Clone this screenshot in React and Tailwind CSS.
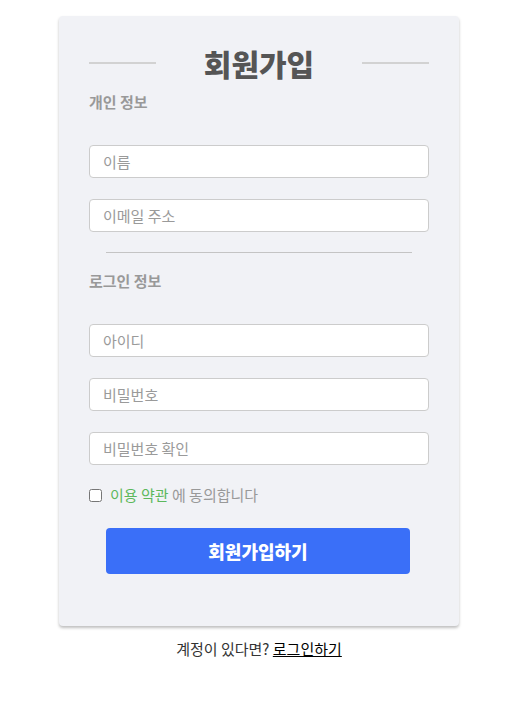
const font = { fontFamily: '"Noto Sans CJK KR", "Noto Sans", sans-serif' };

function Field({ placeholder, type = "text", className = "" }) {
  return (
    <input
      type={type}
      placeholder={placeholder}
      className={`block w-full h-[33px] rounded-[4px] border border-[#cccccc] bg-white px-[13px] text-[15px] text-[#333] placeholder:text-[#9a9a9a] outline-none ${className}`}
    />
  );
}

export default function App() {
  return (
    <div className="min-h-[713px] bg-white" style={font}>
      <div className="w-[518px]">
        <div className="mx-auto mt-[16px] w-[400px] rounded-[4px] bg-[#f1f2f6] px-[30px] pt-[27px] pb-[52px] shadow-[0_2px_3px_rgba(0,0,0,0.25)]">
          <div className="flex h-[40px] items-center justify-between">
            <div className="h-[2px] w-[67px] bg-[#d2d2d2]" />
            <h1 className="text-[30px] font-black leading-[40px] text-[#555555]">회원가입</h1>
            <div className="h-[2px] w-[67px] bg-[#d2d2d2]" />
          </div>

          <p className="mt-[9px] text-[15px] font-bold leading-[20px] text-[#999999]">개인 정보</p>
          <Field placeholder="이름" className="mt-[33px]" />
          <Field placeholder="이메일 주소" type="email" className="mt-[21px]" />

          <div className="mx-[17px] mt-[20px] h-px bg-[#c4c4c4]" />

          <p className="mt-[18px] text-[15px] font-bold leading-[20px] text-[#999999]">로그인 정보</p>
          <Field placeholder="아이디" className="mt-[33px]" />
          <Field placeholder="비밀번호" type="password" className="mt-[21px]" />
          <Field placeholder="비밀번호 확인" type="password" className="mt-[21px]" />

          <label className="mt-[20px] flex h-[20px] items-center gap-[8px] text-[15px] text-[#999999]">
            <input type="checkbox" className="h-[13px] w-[13px] m-0" />
            <span>
              <span className="text-[#5cb85c]">이용 약관</span> 에 동의합니다
            </span>
          </label>

          <button className="mt-[23px] ml-[17px] flex h-[46px] w-[304px] items-center justify-center rounded-[4px] bg-[#3a6ff8] text-[18px] font-black text-white">
            회원가입하기
          </button>
        </div>

        <p className="mt-[13px] text-center text-[15px] leading-[20px] text-[#333333]">
          계정이 있다면? <a href="#" className="text-black underline">로그인하기</a>
        </p>
      </div>
    </div>
  );
}
